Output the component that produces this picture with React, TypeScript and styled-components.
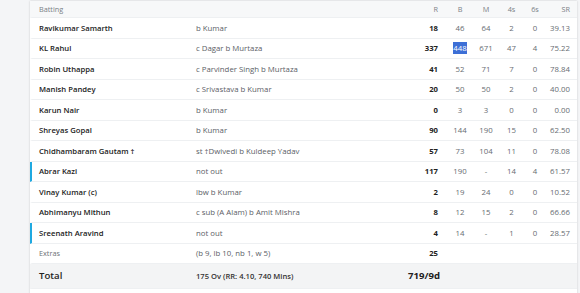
import React from "react";
import styled, { createGlobalStyle } from "styled-components";

const Global = createGlobalStyle`
  html, body { margin: 0; padding: 0; background: #f4f5f7; }
  body { font-family: "Open Sans", "Noto Sans", sans-serif; -webkit-font-smoothing: antialiased; }
`;

const Page = styled.div`
  width: 580px;
  height: 293px;
  overflow: hidden;
  padding: 1px 3px 0 30px;
  box-sizing: border-box;
`;

const Card = styled.div`
  background: #fff;
  box-shadow: 0 0 2px rgba(0, 0, 0, 0.18);
  padding-bottom: 10px;
`;

const cols = "157px 1fr 40px 24px 28px 23px 24px 23px";

const Row = styled.div<{ $accent?: boolean; $h?: number; $bg?: string }>`
  display: grid;
  grid-template-columns: ${cols};
  align-items: center;
  height: ${(p) => p.$h ?? 20.5}px;
  box-sizing: border-box;
  padding: 0 7px 0 7px;
  border-bottom: 1px solid #eef0f2;
  border-left: 2px solid ${(p) => (p.$accent ? "#1fa9e1" : "transparent")};
  background: ${(p) => p.$bg ?? "#fff"};
  font-size: 7.8px;
  color: #555;
  white-space: nowrap;
`;

const HeadCell = styled.div<{ $align?: string; $pad?: number }>`
  color: #7a7f85;
  font-size: 7.3px;
  text-align: ${(p) => p.$align ?? "left"};
  padding-right: ${(p) => p.$pad ?? 0}px;
`;

const Name = styled.div<{ $big?: boolean }>`
  font-weight: 600;
  color: #222;
  font-size: ${(p) => (p.$big ? "9.6px" : "7.7px")};
`;

const Muted = styled.div`
  color: #6b7076;
  font-size: 7.3px;
`;

const Dismissal = styled.div<{ $bold?: boolean }>`
  color: ${(p) => (p.$bold ? "#333" : "#5b6066")};
  font-weight: ${(p) => (p.$bold ? 600 : 400)};
  font-size: ${(p) => (p.$bold ? "7.6px" : "7.8px")};
`;

const Runs = styled.div<{ $big?: boolean }>`
  text-align: right;
  padding-right: 10px;
  font-weight: 700;
  color: #222;
  font-size: ${(p) => (p.$big ? "9.6px" : "7.7px")};
`;

const Stat = styled.div<{ $right?: boolean }>`
  text-align: ${(p) => (p.$right ? "right" : "center")};
  color: #676c72;
`;

const Selected = styled.span`
  background: #3d6fd6;
  color: #fff;
  padding: 1px 0;
`;

type Bat = {
  name: string;
  how: string;
  r: string;
  b: string;
  m: string;
  f: string;
  s: string;
  sr: string;
  notOut?: boolean;
  sel?: boolean;
};

const batters: Bat[] = [
  { name: "Ravikumar Samarth", how: "b Kumar", r: "18", b: "46", m: "64", f: "2", s: "0", sr: "39.13" },
  { name: "KL Rahul", how: "c Dagar b Murtaza", r: "337", b: "448", m: "671", f: "47", s: "4", sr: "75.22", sel: true },
  { name: "Robin Uthappa", how: "c Parvinder Singh b Murtaza", r: "41", b: "52", m: "71", f: "7", s: "0", sr: "78.84" },
  { name: "Manish Pandey", how: "c Srivastava b Kumar", r: "20", b: "50", m: "50", f: "2", s: "0", sr: "40.00" },
  { name: "Karun Nair", how: "b Kumar", r: "0", b: "3", m: "3", f: "0", s: "0", sr: "0.00" },
  { name: "Shreyas Gopal", how: "b Kumar", r: "90", b: "144", m: "190", f: "15", s: "0", sr: "62.50" },
  { name: "Chidhambaram Gautam †", how: "st †Dwivedi b Kuldeep Yadav", r: "57", b: "73", m: "104", f: "11", s: "0", sr: "78.08" },
  { name: "Abrar Kazi", how: "not out", r: "117", b: "190", m: "-", f: "14", s: "4", sr: "61.57", notOut: true },
  { name: "Vinay Kumar (c)", how: "lbw b Kumar", r: "2", b: "19", m: "24", f: "0", s: "0", sr: "10.52" },
  { name: "Abhimanyu Mithun", how: "c sub (A Alam) b Amit Mishra", r: "8", b: "12", m: "15", f: "2", s: "0", sr: "66.66" },
  { name: "Sreenath Aravind", how: "not out", r: "4", b: "14", m: "-", f: "1", s: "0", sr: "28.57", notOut: true },
];

export default function App() {
  return (
    <>
      <Global />
      <Page>
        <Card>
          <Row $h={17} $bg="#f7f8f9">
            <HeadCell>Batting</HeadCell>
            <div />
            <HeadCell $align="right" $pad={10}>R</HeadCell>
            <HeadCell $align="center">B</HeadCell>
            <HeadCell $align="center">M</HeadCell>
            <HeadCell $align="center">4s</HeadCell>
            <HeadCell $align="center">6s</HeadCell>
            <HeadCell $align="right">SR</HeadCell>
          </Row>
          {batters.map((b) => (
            <Row key={b.name} $accent={b.notOut}>
              <Name>{b.name}</Name>
              <Dismissal>{b.how}</Dismissal>
              <Runs>{b.r}</Runs>
              <Stat>{b.sel ? <Selected>{b.b}</Selected> : b.b}</Stat>
              <Stat>{b.m}</Stat>
              <Stat>{b.f}</Stat>
              <Stat>{b.s}</Stat>
              <Stat $right>{b.sr}</Stat>
            </Row>
          ))}
          <Row $h={20}>
            <Muted>Extras</Muted>
            <Dismissal>(b 9, lb 10, nb 1, w 5)</Dismissal>
            <Runs>25</Runs>
          </Row>
          <Row $h={25} $bg="#f3f4f5">
            <Name $big>Total</Name>
            <Dismissal $bold>175 Ov (RR: 4.10, 740 Mins)</Dismissal>
            <Runs $big>719/9d</Runs>
          </Row>
        </Card>
      </Page>
    </>
  );
}
